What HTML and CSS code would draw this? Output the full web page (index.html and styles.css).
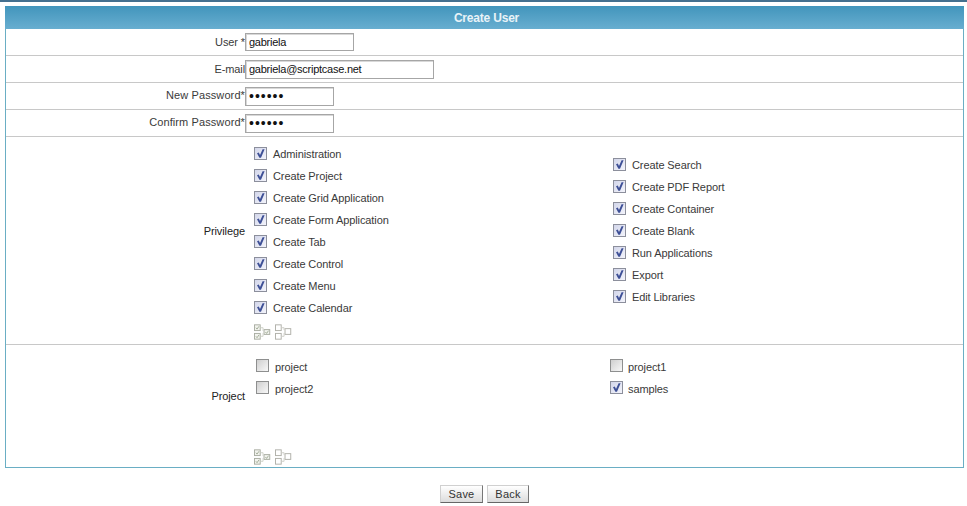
FILE: index.html
```html
<!doctype html>
<html>
<head>
<meta charset="utf-8">
<title>Create User</title>
<link rel="stylesheet" href="styles.css">
</head>
<body>
<div class="topline"></div>
<svg class="defs" width="0" height="0">
	<symbol id="tick" viewBox="0 0 11 11">
		<path d="M2 5.2 L4.4 9.8 L6 9.8 L9.6 1.2 L7.6 1.2 L5 7 L3.8 4.4 Z" fill="#3d4f96"/>
	</symbol>
	<symbol id="all" viewBox="0 0 22 16">
		<g fill="#f2f3ee" stroke="#a9ada2">
			<rect x="0.5" y="0.5" width="6" height="6"/>
			<rect x="0.5" y="9.5" width="6" height="6"/>
			<rect x="10.5" y="5.5" width="6" height="5"/>
		</g>
		<g fill="none" stroke="#a3ad98">
			<path d="M2 3.5 L3.2 5 L5.2 2"/>
			<path d="M2 12.5 L3.2 14 L5.2 11"/>
			<path d="M12 8 L13.2 9.5 L15.2 6.6"/>
		</g>
		<path d="M7 3.5 H9.5 V7 M7 12.5 H9.5 V9" fill="none" stroke="#cfd2c8"/>
	</symbol>
	<symbol id="none" viewBox="0 0 22 16">
		<g fill="#fff" stroke="#b0b0a9">
			<rect x="0.5" y="0.5" width="6" height="6"/>
			<rect x="0.5" y="9.5" width="6" height="6"/>
			<rect x="10.5" y="4.5" width="6" height="6"/>
		</g>
		<path d="M7 3.5 H9.5 V6 M7 12.5 H9.5 V9" fill="none" stroke="#cfcfc8"/>
	</symbol>
</svg>
<div class="panel">
	<div class="title">Create User</div>
	<div class="row">
		<label class="lbl">User *</label>
		<input class="txt w-user" type="text" value="gabriela">
	</div>
	<div class="row">
		<label class="lbl">E-mail</label>
		<input class="txt w-mail" type="text" value="gabriela@scriptcase.net">
	</div>
	<div class="row">
		<label class="lbl raised">New Password*</label>
		<input class="txt w-pass" type="password" value="secret">
	</div>
	<div class="row">
		<label class="lbl raised">Confirm Password*</label>
		<input class="txt w-pass" type="password" value="secret">
	</div>
	<div class="row priv">
		<div class="lbl side">Privilege</div>
		<div class="lists">
			<div class="cols">
				<ul class="opts left">
					<li><span class="box on"><svg><use href="#tick"/></svg></span>Administration</li>
					<li><span class="box on"><svg><use href="#tick"/></svg></span>Create Project</li>
					<li><span class="box on"><svg><use href="#tick"/></svg></span>Create Grid Application</li>
					<li><span class="box on"><svg><use href="#tick"/></svg></span>Create Form Application</li>
					<li><span class="box on"><svg><use href="#tick"/></svg></span>Create Tab</li>
					<li><span class="box on"><svg><use href="#tick"/></svg></span>Create Control</li>
					<li><span class="box on"><svg><use href="#tick"/></svg></span>Create Menu</li>
					<li><span class="box on"><svg><use href="#tick"/></svg></span>Create Calendar</li>
				</ul>
				<ul class="opts right">
					<li><span class="box on"><svg><use href="#tick"/></svg></span>Create Search</li>
					<li><span class="box on"><svg><use href="#tick"/></svg></span>Create PDF Report</li>
					<li><span class="box on"><svg><use href="#tick"/></svg></span>Create Container</li>
					<li><span class="box on"><svg><use href="#tick"/></svg></span>Create Blank</li>
					<li><span class="box on"><svg><use href="#tick"/></svg></span>Run Applications</li>
					<li><span class="box on"><svg><use href="#tick"/></svg></span>Export</li>
					<li><span class="box on"><svg><use href="#tick"/></svg></span>Edit Libraries</li>
				</ul>
			</div>
			<div class="tools">
				<svg class="tool"><use href="#all"/></svg>
				<svg class="tool"><use href="#none"/></svg>
			</div>
		</div>
	</div>
	<div class="row proj">
		<div class="lbl side">Project</div>
		<div class="lists">
			<div class="cols">
				<ul class="opts pleft">
					<li><span class="box"></span>project</li>
					<li><span class="box"></span>project2</li>
				</ul>
				<ul class="opts pright">
					<li><span class="box"></span>project1</li>
					<li><span class="box on"><svg><use href="#tick"/></svg></span>samples</li>
				</ul>
			</div>
			<div class="tools">
				<svg class="tool"><use href="#all"/></svg>
				<svg class="tool"><use href="#none"/></svg>
			</div>
		</div>
	</div>
</div>
<div class="actions">
	<button class="btn save">Save</button>
	<button class="btn back">Back</button>
</div>
</body>
</html>
```

FILE: styles.css
```css
body{
	margin:0;
	background:#fff;
	font-family:"Liberation Sans",Arial,sans-serif;
	font-size:11px;
	color:#3a3a3a;
}
.defs{
	position:absolute;
}
.topline{
	height:2px;
	background:#44708f;
	margin-bottom:4px;
}
.panel{
	width:959px;
	height:462px;
	box-sizing:border-box;
	margin-left:5px;
	border-left:1px solid #6aaec4;
	border-right:1px solid #6aaec4;
	border-bottom:1px solid #6aaec4;
	display:flex;
	flex-direction:column;
}
.title{
	height:23px;
	margin:0 -1px;
	padding-left:4px;
	background:linear-gradient(#4295bc,#68aed0);
	color:#e8f3f8;
	font-weight:bold;
	font-size:12px;
	letter-spacing:-0.2px;
	line-height:24px;
	text-align:center;
}
.row{
	display:flex;
	align-items:center;
	height:27px;
	box-sizing:border-box;
	border-bottom:1px solid #c8c8c8;
}
.row.priv{
	height:208px;
}
.row.proj{
	flex:1;
	border-bottom:0;
}
.lbl{
	width:239px;
	flex:none;
	text-align:right;
	letter-spacing:-0.1px;
}
.raised{
	padding-bottom:2px;
	letter-spacing:0.1px;
}
.side{
	color:#222;
	padding-bottom:20px;
}
.txt{
	box-sizing:border-box;
	height:19px;
	margin:0;
	padding:0 3px;
	border:1px solid #a6a6a6;
	box-shadow:inset 1px 1px 0 #d8d8d8;
	font-family:"Liberation Sans",Arial,sans-serif;
	font-size:11px;
	letter-spacing:-0.25px;
	color:#111;
	outline:none;
}
.txt[type=password]{
	font-size:14px;
	letter-spacing:1px;
}
.w-user{ width:109px; height:18px; }
.w-mail{ width:189px; }
.w-pass{ width:89px; }
.lists{
	flex:1;
	height:100%;
	display:flex;
	flex-direction:column;
}
.cols{
	display:flex;
	align-items:center;
}
.priv .cols{
	height:187px;
}
.proj .cols{
	height:100px;
	align-items:flex-start;
	padding-top:11px;
	box-sizing:border-box;
}
.opts{
	list-style:none;
	margin:0;
	padding:0;
}
.opts li{
	display:flex;
	align-items:center;
	height:22px;
	letter-spacing:-0.1px;
}
.opts.left{
	width:359px;
	margin-left:9px;
}
.opts.pleft{
	width:354px;
	margin-left:11px;
}
.box{
	width:13px;
	height:13px;
	flex:none;
	box-sizing:border-box;
	margin-right:6px;
	border:1px solid #8e8f8f;
	background:linear-gradient(135deg,#cfcfcf,#f8f8f8);
}
.box.on{
	background:linear-gradient(135deg,#d2d6ea,#f3f4fb);
	border-color:#8c8f9c;
}
.box svg{
	display:block;
	width:11px;
	height:11px;
}
.pleft .box,
.pright .box{
	margin-bottom:4px;
}
.pright .box{
	margin-right:5px;
}
.tools{
	display:flex;
	margin-left:9px;
}
.proj .tools{
	margin-top:auto;
	margin-bottom:2px;
}
.tool{
	width:21px;
	height:16px;
}
.actions{
	display:flex;
	gap:4px;
	padding:17px 0 0 440px;
}
.btn{
	box-sizing:border-box;
	height:18px;
	padding:0;
	border:1px solid #d0d0d0;
	border-right-color:#777;
	border-bottom-color:#666;
	background:linear-gradient(#fff,#dcdcdc);
	font-family:"Liberation Sans",Arial,sans-serif;
	font-size:11px;
	letter-spacing:0.2px;
	color:#333;
}
.save{ width:43px; }
.back{ width:42px; }
```
